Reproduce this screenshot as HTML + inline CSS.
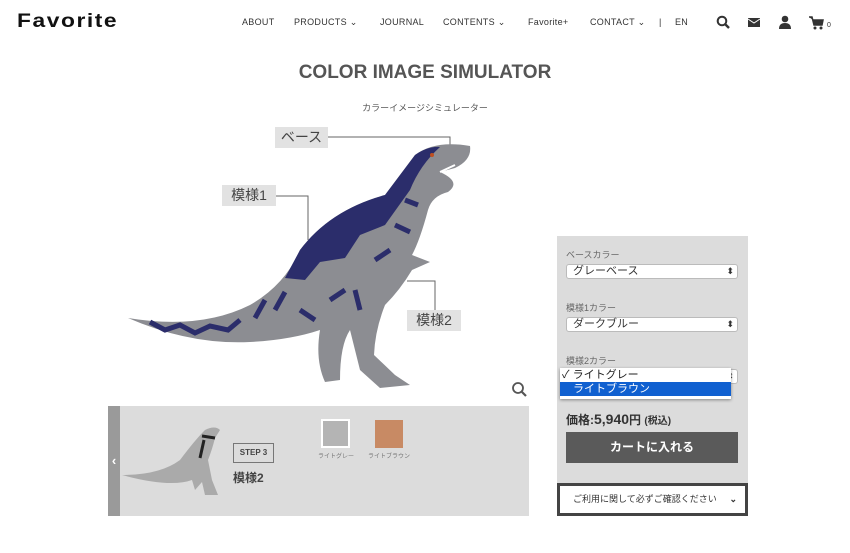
<!DOCTYPE html>
<html><head><meta charset="utf-8"><style>
*{margin:0;padding:0;box-sizing:border-box}
body{width:850px;height:553px;background:#fff;font-family:"Liberation Sans","Noto Sans CJK JP",sans-serif;color:#444;position:relative;overflow:hidden}
.a{position:absolute}
.nav{top:17px;font-size:9px;color:#333;letter-spacing:.3px}
.lbl{background:#e2e2e2;color:#444;font-size:14px;text-align:center;line-height:21px;height:21px}
.sel{left:566px;width:172px;height:15px;background:#fff;border:1px solid #bbb;border-radius:3px;font-size:11px;line-height:13px;padding-left:6px;color:#333}
.sel:after{content:"⬍";position:absolute;right:3px;top:0;font-size:9px}
.sl{left:566px;font-size:9px;color:#666}
</style></head><body>
<div class="a" style="left:17px;top:11px;font-size:19px;font-weight:900;color:#111;letter-spacing:1.3px;transform:scaleX(1.2);transform-origin:left">Favorite</div>
<div class="a nav" style="left:242px">ABOUT</div>
<div class="a nav" style="left:294px">PRODUCTS ⌄</div>
<div class="a nav" style="left:380px">JOURNAL</div>
<div class="a nav" style="left:443px">CONTENTS ⌄</div>
<div class="a nav" style="left:528px">Favorite+</div>
<div class="a nav" style="left:590px">CONTACT ⌄</div>
<div class="a nav" style="left:659px">|</div>
<div class="a nav" style="left:675px">EN</div>
<svg class="a" style="left:716px;top:15px" width="120" height="16">
<circle cx="6" cy="6" r="4.3" fill="none" stroke="#333" stroke-width="2"/><line x1="9" y1="9" x2="13" y2="13" stroke="#333" stroke-width="2.4"/>
<rect x="32" y="3" width="12" height="9" fill="#333"/><path d="M32 4 L38 8 L44 4" stroke="#fff" fill="none"/>
<circle cx="69" cy="4" r="3.3" fill="#333"/><path d="M63 14 Q63 8 69 8 Q75 8 75 14Z" fill="#333"/>
<path d="M93 2 L96 2 L98 10 L106 10 L107 5 L97 5" fill="#333" stroke="#333" stroke-width="1.5"/><circle cx="99" cy="13" r="1.5" fill="#333"/><circle cx="105" cy="13" r="1.5" fill="#333"/>
<text x="111" y="12" font-size="7" fill="#333" font-family="Liberation Sans">0</text></svg>
<div class="a" style="left:0;width:850px;top:62px;text-align:center;font-size:19px;font-weight:bold;color:#555">COLOR IMAGE SIMULATOR</div>
<div class="a" style="left:0;width:850px;top:101px;text-align:center;font-size:9px;color:#555">カラーイメージシミュレーター</div>

<svg class="a" style="left:0;top:0" width="850" height="420">
<g stroke="#666" fill="none" stroke-width="1"><path d="M328 137 H450 V150"/><path d="M276 196 H308 V240"/><path d="M407 281 H435 V310"/></g>
<path d="M128 318 Q200 330 250 305 Q285 285 300 250 Q330 210 385 195 Q400 175 415 155 Q435 140 470 146 Q472 160 455 168 L440 172 Q462 182 448 192 Q432 196 428 210 Q420 240 412 255 L430 262 L412 270 Q400 290 385 305 Q375 330 374 355 L395 375 L410 385 L380 388 L360 370 L350 330 Q340 345 340 380 L325 382 Q315 360 320 330 Q290 340 250 342 Q190 345 128 318Z" fill="#8c8d92"/>
<path d="M300 250 Q330 210 385 195 Q400 175 415 155 Q428 146 440 147 Q420 165 410 190 L385 225 L360 235 L345 258 L320 262 L305 280 L285 278Z" fill="#2b2d6b"/>
<g stroke="#2b2d6b" stroke-width="5" fill="none">
<path d="M150 322 L165 330 L180 325 L195 333 L210 326 L228 330 L240 320"/>
<path d="M255 318 L265 300 M275 310 L285 292 M330 300 L345 290 M355 290 L360 310 M300 310 L315 320 M375 260 L390 250 M395 225 L410 232 M405 200 L418 205"/></g>
<path d="M440 172 L455 165" stroke="#fff" stroke-width="2"/>
<circle cx="432" cy="155" r="2" fill="#c05020"/>
<circle cx="518" cy="388" r="5" fill="none" stroke="#555" stroke-width="1.8"/><line x1="522" y1="392" x2="526" y2="396" stroke="#555" stroke-width="2.2"/>
</svg>
<div class="a lbl" style="left:275px;top:127px;width:53px">ベース</div>
<div class="a lbl" style="left:222px;top:185px;width:54px">模様1</div>
<div class="a lbl" style="left:407px;top:310px;width:54px">模様2</div>

<div class="a" style="left:108px;top:406px;width:421px;height:110px;background:#dcdcdc"></div>
<div class="a" style="left:108px;top:406px;width:12px;height:110px;background:#9a9a9a;color:#fff;font-size:13px;font-weight:bold;line-height:110px;text-align:center">‹</div>
<svg class="a" style="left:120px;top:420px" width="110" height="80"><path d="M2 55 Q40 55 60 40 Q75 20 85 10 Q95 5 100 10 L95 18 Q92 30 88 40 L92 60 L98 75 L85 75 L82 62 L75 70 L72 60 Q50 68 2 55Z" fill="#aaa"/><path d="M82 16 L95 18 M84 20 L80 38" stroke="#222" stroke-width="3"/></svg>
<div class="a" style="left:233px;top:443px;width:41px;height:20px;border:1px solid #777;font-size:8px;font-weight:bold;text-align:center;line-height:18px;color:#444">STEP 3</div>
<div class="a" style="left:233px;top:469px;font-size:12px;font-weight:bold;color:#444">模様2</div>
<div class="a" style="left:321px;top:419px;width:29px;height:29px;background:#b4b4b4;border:2px solid #fff"></div>
<div class="a" style="left:375px;top:420px;width:28px;height:28px;background:#c88a64"></div>
<div class="a" style="left:318px;top:451px;font-size:6px;color:#777">ライトグレー</div>
<div class="a" style="left:368px;top:451px;font-size:6px;color:#777">ライトブラウン</div>

<div class="a" style="left:557px;top:236px;width:191px;height:247px;background:#dcdcdc"></div>
<div class="a sl" style="top:248px">ベースカラー</div>
<div class="a sel" style="top:264px">グレーベース</div>
<div class="a sl" style="top:301px">模様1カラー</div>
<div class="a sel" style="top:317px">ダークブルー</div>
<div class="a sl" style="top:354px">模様2カラー</div>
<div class="a sel" style="top:369px"></div>
<div class="a" style="left:560px;top:368px;width:171px;height:31px;background:#fff;box-shadow:0 1px 3px rgba(0,0,0,.4);font-size:11px;color:#222">
<div style="height:14px;line-height:14px;padding-left:2px">✓ ライトグレー</div>
<div style="height:14px;line-height:14px;padding-left:13px;background:#1060d0;color:#fff">ライトブラウン</div></div>
<div class="a" style="left:566px;top:411px;font-size:12px;font-weight:bold;color:#333">価格:<span style="font-size:14px">5,940</span>円 <span style="font-size:10px">(税込)</span></div>
<div class="a" style="left:566px;top:432px;width:172px;height:31px;background:#5a5a5a;color:#fff;font-size:12px;font-weight:bold;text-align:center;line-height:31px">カートに入れる</div>
<div class="a" style="left:557px;top:483px;width:191px;height:33px;background:#fff;border:3px solid #444;font-size:9px;color:#333;line-height:27px;padding-left:13px">ご利用に関して必ずご確認ください<span style="position:absolute;right:8px;font-weight:bold">⌄</span></div>
</body></html>
